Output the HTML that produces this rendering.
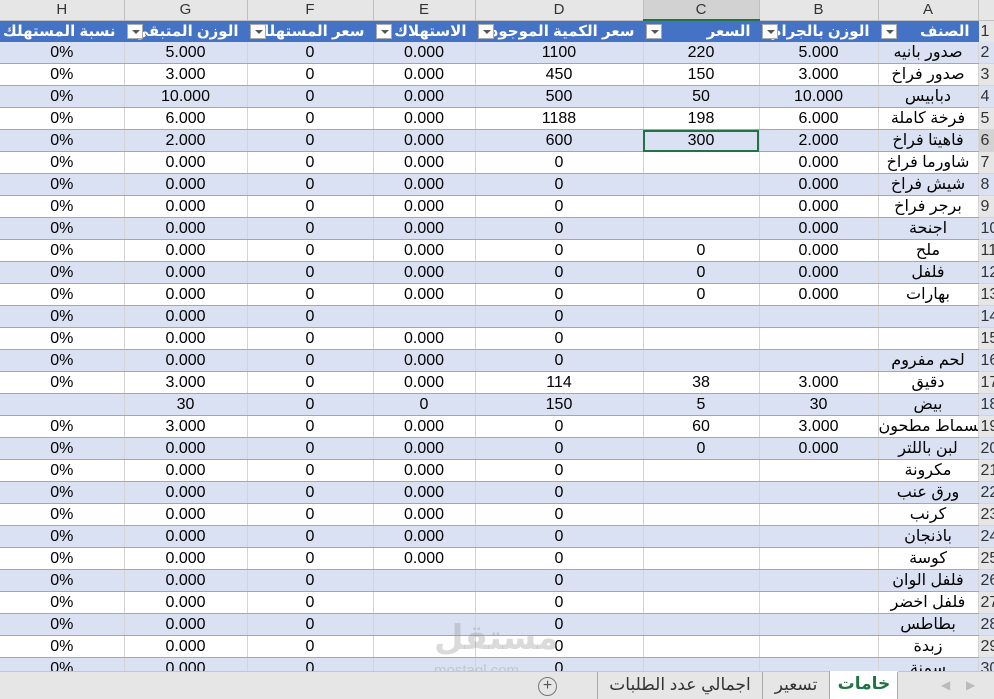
<!DOCTYPE html>
<html><head><meta charset="utf-8"><style>
body{margin:0;width:994px;height:698px;overflow:hidden;background:#fff;font-family:"Liberation Sans","DejaVu Sans",sans-serif;position:relative}
table{border-collapse:collapse;table-layout:fixed;position:absolute;left:0;top:0;width:994px}
td{height:21px;padding:0;text-align:center;font-size:16px;color:#000;border-right:1px solid #d4d4d4;border-bottom:1px solid #8ea9db;white-space:nowrap;overflow:hidden;line-height:21px}
tr.b td{background:#d9e1f2}
td.rn{background:#e6e6e6;border-left:1px solid #bfbfbf;border-right:none;text-align:left;padding-left:2px;color:#333;border-bottom:1px solid #d4d4d4;text-overflow:clip}
tr.ch td{height:19px;background:#e6e6e6;color:#333;border-bottom:1px solid #bfbfbf;border-right:1px solid #bfbfbf;line-height:19px;font-size:15px}
tr.h td{background:#4472c4;color:#fff;font-weight:bold;text-align:right;padding-right:8px;position:relative;border-right:1px solid #4472c4;border-bottom:none;font-size:15px}
.dd{position:absolute;left:2px;top:3px;width:16px;height:15px;background:#fff;border:1px solid #ababab;box-sizing:border-box}
.dd:after{content:"";position:absolute;left:4px;top:5px;border-left:4px solid transparent;border-right:4px solid transparent;border-top:4px solid #555}
.sel{outline:2px solid #217346;outline-offset:-2px}
.tabs{position:absolute;left:0;top:671px;width:994px;height:27px;background:#e6e6e6;border-top:1px solid #c6c6c6}
.tab{position:absolute;top:0;height:27px;line-height:26px;font-size:17px;color:#333;text-align:center;border-left:1px solid #aaa}
.wm{position:absolute;left:434px;top:618px;color:rgba(150,150,150,.35);font-size:34px;font-weight:bold}
.wm2{position:absolute;left:434px;top:662px;color:rgba(150,150,150,.35);font-size:15px}
</style></head><body>
<table>
<colgroup><col style="width:124px"><col style="width:123px"><col style="width:126px"><col style="width:102px"><col style="width:168px"><col style="width:116px"><col style="width:119px"><col style="width:100px"><col style="width:16px"></colgroup>
<tr class="ch"><td>H</td><td>G</td><td>F</td><td>E</td><td>D</td><td style="border-bottom:2px solid #217346;background:#d2d2d2">C</td><td>B</td><td>A</td><td class="rn" style="background:#e6e6e6"></td></tr>
<tr class="h"><td>نسبة المستهلك</td><td><span class="dd"></span>الوزن المتبقي</td><td><span class="dd"></span>سعر المستهلك</td><td><span class="dd"></span>الاستهلاك</td><td><span class="dd"></span>سعر الكمية الموجودة</td><td><span class="dd"></span>السعر</td><td><span class="dd"></span>الوزن بالجرام</td><td><span class="dd"></span>الصنف</td><td class="rn" style="background:#e6e6e6;font-weight:normal;padding-right:0;padding-left:2px;text-align:left;color:#333;font-size:16px">1</td></tr>
<tr class="b"><td>0%</td><td>5.000</td><td>0</td><td>0.000</td><td>1100</td><td>220</td><td>5.000</td><td>صدور بانيه</td><td class="rn">2</td></tr>
<tr><td>0%</td><td>3.000</td><td>0</td><td>0.000</td><td>450</td><td>150</td><td>3.000</td><td>صدور فراخ</td><td class="rn">3</td></tr>
<tr class="b"><td>0%</td><td>10.000</td><td>0</td><td>0.000</td><td>500</td><td>50</td><td>10.000</td><td>دبابيس</td><td class="rn">4</td></tr>
<tr><td>0%</td><td>6.000</td><td>0</td><td>0.000</td><td>1188</td><td>198</td><td>6.000</td><td>فرخة كاملة</td><td class="rn">5</td></tr>
<tr class="b"><td>0%</td><td>2.000</td><td>0</td><td>0.000</td><td>600</td><td class="sel">300</td><td>2.000</td><td>فاهيتا فراخ</td><td class="rn" style="background:#d2d2d2">6</td></tr>
<tr><td>0%</td><td>0.000</td><td>0</td><td>0.000</td><td>0</td><td></td><td>0.000</td><td>شاورما فراخ</td><td class="rn">7</td></tr>
<tr class="b"><td>0%</td><td>0.000</td><td>0</td><td>0.000</td><td>0</td><td></td><td>0.000</td><td>شيش فراخ</td><td class="rn">8</td></tr>
<tr><td>0%</td><td>0.000</td><td>0</td><td>0.000</td><td>0</td><td></td><td>0.000</td><td>برجر فراخ</td><td class="rn">9</td></tr>
<tr class="b"><td>0%</td><td>0.000</td><td>0</td><td>0.000</td><td>0</td><td></td><td>0.000</td><td>اجنحة</td><td class="rn">10</td></tr>
<tr><td>0%</td><td>0.000</td><td>0</td><td>0.000</td><td>0</td><td>0</td><td>0.000</td><td>ملح</td><td class="rn">11</td></tr>
<tr class="b"><td>0%</td><td>0.000</td><td>0</td><td>0.000</td><td>0</td><td>0</td><td>0.000</td><td>فلفل</td><td class="rn">12</td></tr>
<tr><td>0%</td><td>0.000</td><td>0</td><td>0.000</td><td>0</td><td>0</td><td>0.000</td><td>بهارات</td><td class="rn">13</td></tr>
<tr class="b"><td>0%</td><td>0.000</td><td>0</td><td></td><td>0</td><td></td><td></td><td></td><td class="rn">14</td></tr>
<tr><td>0%</td><td>0.000</td><td>0</td><td>0.000</td><td>0</td><td></td><td></td><td></td><td class="rn">15</td></tr>
<tr class="b"><td>0%</td><td>0.000</td><td>0</td><td>0.000</td><td>0</td><td></td><td></td><td>لحم مفروم</td><td class="rn">16</td></tr>
<tr><td>0%</td><td>3.000</td><td>0</td><td>0.000</td><td>114</td><td>38</td><td>3.000</td><td>دقيق</td><td class="rn">17</td></tr>
<tr class="b"><td></td><td>30</td><td>0</td><td>0</td><td>150</td><td>5</td><td>30</td><td>بيض</td><td class="rn">18</td></tr>
<tr><td>0%</td><td>3.000</td><td>0</td><td>0.000</td><td>0</td><td>60</td><td>3.000</td><td>بقسماط مطحون</td><td class="rn">19</td></tr>
<tr class="b"><td>0%</td><td>0.000</td><td>0</td><td>0.000</td><td>0</td><td>0</td><td>0.000</td><td>لبن باللتر</td><td class="rn">20</td></tr>
<tr><td>0%</td><td>0.000</td><td>0</td><td>0.000</td><td>0</td><td></td><td></td><td>مكرونة</td><td class="rn">21</td></tr>
<tr class="b"><td>0%</td><td>0.000</td><td>0</td><td>0.000</td><td>0</td><td></td><td></td><td>ورق عنب</td><td class="rn">22</td></tr>
<tr><td>0%</td><td>0.000</td><td>0</td><td>0.000</td><td>0</td><td></td><td></td><td>كرنب</td><td class="rn">23</td></tr>
<tr class="b"><td>0%</td><td>0.000</td><td>0</td><td>0.000</td><td>0</td><td></td><td></td><td>باذنجان</td><td class="rn">24</td></tr>
<tr><td>0%</td><td>0.000</td><td>0</td><td>0.000</td><td>0</td><td></td><td></td><td>كوسة</td><td class="rn">25</td></tr>
<tr class="b"><td>0%</td><td>0.000</td><td>0</td><td></td><td>0</td><td></td><td></td><td>فلفل الوان</td><td class="rn">26</td></tr>
<tr><td>0%</td><td>0.000</td><td>0</td><td></td><td>0</td><td></td><td></td><td>فلفل اخضر</td><td class="rn">27</td></tr>
<tr class="b"><td>0%</td><td>0.000</td><td>0</td><td></td><td>0</td><td></td><td></td><td>بطاطس</td><td class="rn">28</td></tr>
<tr><td>0%</td><td>0.000</td><td>0</td><td></td><td>0</td><td></td><td></td><td>زبدة</td><td class="rn">29</td></tr>
<tr class="b"><td>0%</td><td>0.000</td><td>0</td><td></td><td>0</td><td></td><td></td><td>سمنة</td><td class="rn">30</td></tr>
</table>
<div class="wm">مستقل</div><div class="wm2">mostaql.com</div>
<div class="tabs">
<div style="position:absolute;left:538px;top:5px;width:17px;height:17px;border:1px solid #777;border-radius:50%;text-align:center;line-height:16px;font-size:16px;color:#555">+</div>
<div class="tab" style="left:597px;width:164px">اجمالي عدد الطلبات</div>
<div class="tab" style="left:762px;width:66px">تسعير</div>
<div class="tab" style="left:829px;width:68px;background:#fff;color:#217346;font-weight:bold;top:-1px;height:28px">خامات</div>
<div class="tab" style="left:897px;width:97px"><span style="position:absolute;left:43px;color:#bbb;font-size:12px">◀</span><span style="position:absolute;left:68px;color:#bbb;font-size:12px">▶</span></div>
</div>
</body></html>
